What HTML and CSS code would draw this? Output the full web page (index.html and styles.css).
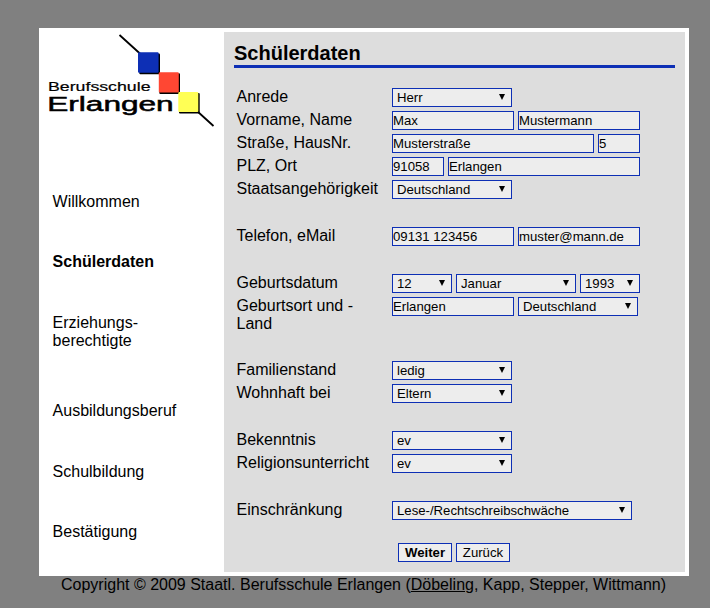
FILE: index.html
```html
<!DOCTYPE html>
<html lang="de">
<head>
<meta charset="utf-8">
<title>Schülerdaten</title>
<link rel="stylesheet" href="styles.css">
</head>
<body>
<div class="panel">
  <aside class="sidebar">
    <svg class="logo" width="181" height="104" viewBox="39 28 181 104" role="img" aria-label="Berufsschule Erlangen">
      <path d="M119.5 35 L141 54.5 M197 111 L213.5 126" stroke="#000" stroke-width="1.8"/>
      <g fill="#000"><rect x="139.3" y="53.5" width="20.7" height="20.8" rx="1"/><rect x="159.3" y="73.3" width="20.7" height="20.8" rx="1"/><rect x="179" y="93" width="20.7" height="20.6" rx="1"/></g>
      <rect x="138" y="52.3" width="20.6" height="20.4" rx="1" fill="#0d2fb5"/>
      <rect x="158.8" y="72.3" width="20" height="20.2" rx="1" fill="#ff4733"/>
      <rect x="178.3" y="92.1" width="20" height="20" rx="1" fill="#ffff55"/>
      <text class="logo-text" x="48" y="91" font-size="13.2" textLength="102.5" lengthAdjust="spacingAndGlyphs">Berufsschule</text>
      <text class="logo-text logo-town" x="47.2" y="111" font-size="20" textLength="126.5" lengthAdjust="spacingAndGlyphs">Erlangen</text>
    </svg>
    <nav class="nav">
      <a>Willkommen</a>
      <a class="active">Schülerdaten</a>
      <a class="tall">Erziehungs-<br>berechtigte</a>
      <a>Ausbildungsberuf</a>
      <a>Schulbildung</a>
      <a>Bestätigung</a>
    </nav>
  </aside>
  <main class="content">
    <h1>Schülerdaten</h1>
    <form class="form">
      <div class="row"><label>Anrede</label><span class="select"><select><option>Herr</option></select></span></div>
      <div class="row"><label>Vorname, Name</label><input class="w122" value="Max"><input class="w122" value="Mustermann"></div>
      <div class="row"><label>Straße, HausNr.</label><input class="w202" value="Musterstraße"><input class="w42" value="5"></div>
      <div class="row"><label>PLZ, Ort</label><input class="w52" value="91058"><input class="w192" value="Erlangen"></div>
      <div class="row"><label>Staatsangehörigkeit</label><span class="select"><select><option>Deutschland</option></select></span></div>
      <div class="row group"><label>Telefon, eMail</label><input class="w122" value="09131 123456"><input class="w122" value="muster@mann.de"></div>
      <div class="row group"><label>Geburtsdatum</label><span class="select short"><select><option>12</option></select></span><span class="select"><select><option>Januar</option></select></span><span class="select short"><select><option>1993</option></select></span></div>
      <div class="row double"><label>Geburtsort und -<br>Land</label><input class="w122" value="Erlangen"><span class="select"><select><option>Deutschland</option></select></span></div>
      <div class="row group"><label>Familienstand</label><span class="select"><select><option>ledig</option></select></span></div>
      <div class="row"><label>Wohnhaft bei</label><span class="select"><select><option>Eltern</option></select></span></div>
      <div class="row group"><label>Bekenntnis</label><span class="select"><select><option>ev</option></select></span></div>
      <div class="row"><label>Religionsunterricht</label><span class="select"><select><option>ev</option></select></span></div>
      <div class="row group"><label>Einschränkung</label><span class="select long"><select><option>Lese-/Rechtschreibschwäche</option></select></span></div>
      <div class="buttons"><button class="primary" type="button">Weiter</button><button type="button">Zurück</button></div>
    </form>
  </main>
</div>
<footer>Copyright © 2009 Staatl. Berufsschule Erlangen (<a>Döbeling</a>, Kapp, Stepper, Wittmann)</footer>
</body>
</html>
```
FILE: styles.css
```css
* { box-sizing: border-box; }
body {
  margin: 0;
  padding: 28px 21px 0 39px;
  height: 608px;
  overflow: hidden;
  background: #808080;
  color: #000;
  font: 16px/18px "Liberation Sans", Arial, sans-serif;
}
.panel {
  display: flex;
  width: 650px;
  height: 548px;
  padding-right: 4px;
  background: #fff;
}
.sidebar { width: 185px; }
.logo { display: block; }
.logo-text { font-family: "Liberation Sans", Arial, sans-serif; fill: #000; stroke: #000; stroke-width: 0.2px; }
.logo-town { stroke-width: 0.5px; }
.nav {
  display: flex;
  flex-direction: column;
  gap: 42px;
  padding: 61px 0 0 13.6px;
}
.nav a { height: 18.5px; }
.nav .active { height: 19px; margin-top: -0.5px; font-weight: bold; }
.nav .tall { height: 46px; }
.content {
  width: 461px;
  height: 540px;
  margin-top: 4px;
  padding: 9px 10px 0;
  background: #ddd;
}
h1 {
  margin: 0;
  height: 27px;
  border-bottom: 3px solid #0d2fb5;
  font-size: 20px;
  line-height: 24px;
}
.form { padding: 20px 0 0 2.5px; }
.row {
  display: flex;
  gap: 4px;
  height: 19px;
  margin-bottom: 4px;
}
.row label { width: 151.5px; white-space: nowrap; }
.group { margin-top: 28px; }
.double { height: 36px; }
input, select, button {
  height: 19px;
  margin: 0;
  border: 1px solid #0d2fb5;
  border-radius: 0;
  background: #ededed;
  color: #000;
  font: 13.18px "Liberation Sans", Arial, sans-serif;
}
input { padding: 1px 0; }
select {
  width: 100%;
  padding: 0 4px;
  appearance: none;
}
.select { position: relative; display: block; width: 120px; height: 19px; }
.select::after {
  content: "";
  position: absolute;
  top: 6px;
  right: 7px;
  border: solid transparent;
  border-width: 6px 3px 0;
  border-top-color: #000;
}
.short { width: 60px; }
.long { width: 240px; }
.w42 { width: 42px; }
.w52 { width: 52px; }
.w122 { width: 122px; }
.w192 { width: 192px; }
.w202 { width: 202px; }
.buttons {
  display: flex;
  gap: 4px;
  padding: 19px 0 0 161.5px;
}
button { width: 54px; padding: 0; }
.primary { font-weight: bold; }
footer { padding-left: 22px; white-space: nowrap; }
footer a { text-decoration: underline; }
```
